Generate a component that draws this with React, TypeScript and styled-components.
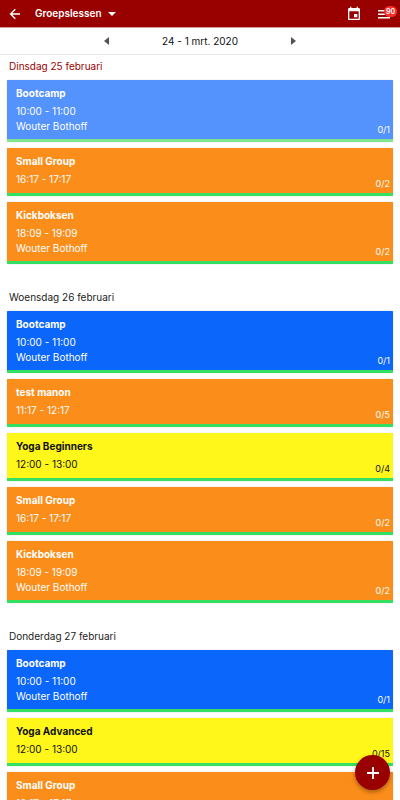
import React from "react";
import styled, { createGlobalStyle } from "styled-components";

const GlobalStyle = createGlobalStyle`
  * { box-sizing: border-box; }
  body {
    margin: 0;
    background: #fff;
    color: #111;
    font: 10px/15px Inter, "Noto Sans", sans-serif;
  }
  button { font: inherit; color: inherit; border: 0; padding: 0; background: none; cursor: pointer; }
`;

const Screen = styled.div`
  height: 100vh;
  display: flex;
  flex-direction: column;
  overflow: hidden;
`;

const TopBar = styled.header`
  flex: none;
  height: 28px;
  display: flex;
  align-items: center;
  padding: 0 9px;
  background: #990000;
  border-bottom: 1px solid #cf9a9a;
  color: #fff;
`;

const IconButton = styled.button`
  display: flex;
  position: relative;
`;

const TitleButton = styled.button`
  display: flex;
  align-items: center;
  gap: 6px;
  margin-left: 14px;
  && { font-weight: 600; }
`;

const Actions = styled.div`
  display: flex;
  align-items: center;
  gap: 15px;
  margin-left: auto;
`;

const Badge = styled.span`
  position: absolute;
  top: -2px;
  right: -6px;
  min-width: 13px;
  height: 11px;
  border-radius: 6px;
  background: #f5302b;
  font-size: 7px;
  line-height: 11px;
  font-weight: 600;
  text-align: center;
`;

const WeekBar = styled.nav`
  flex: none;
  height: 27px;
  display: flex;
  align-items: center;
  justify-content: center;
  border-bottom: 1px solid #e6e6e6;
`;

const WeekLabel = styled.span`
  width: 182px;
  text-align: center;
`;

const Agenda = styled.main`
  flex: 1;
  min-height: 0;
  overflow: hidden;
  padding: 0 7px;
`;

const Day = styled.section`
  & + & { margin-top: 22px; }
`;

const DayTitle = styled.h2<{ $today?: boolean }>`
  margin: 0;
  padding: 3px 2px 6px;
  font-size: 10px;
  line-height: 16px;
  font-weight: 400;
  color: ${(p) => (p.$today ? "#990000" : "#222")};
`;

const Lessons = styled.div`
  display: flex;
  flex-direction: column;
  gap: 6px;
`;

type Tone = "past" | "blue" | "orange" | "yellow";
const fills: Record<Tone, string> = {
  past: "#5492fd",
  blue: "#0b66fb",
  orange: "#fb8d1a",
  yellow: "#fff719",
};

const Card = styled.article<{ $tone: Tone }>`
  display: flex;
  align-items: flex-end;
  justify-content: space-between;
  min-height: 48px;
  padding: 6px 3px 0 9px;
  border-bottom: 3px solid ${(p) => (p.$tone === "past" ? "#81e590" : "#35df61")};
  border-radius: 1px;
  background: ${(p) => fills[p.$tone]};
  color: ${(p) => (p.$tone === "yellow" ? "#111" : "#fff")};
  box-shadow: 0 0 1px rgba(0, 0, 0, 0.4);
`;

const Details = styled.div`
  align-self: flex-start;
  padding-bottom: 5px;
`;

const Name = styled.h3`
  margin: 0 0 3px;
  font-size: 10px;
  line-height: 15px;
  font-weight: 700;
`;

const Line = styled.div``;

const Count = styled.span`
  font-size: 9px;
  line-height: 12px;
  padding-bottom: 3px;
`;

const AddButton = styled.button`
  position: fixed;
  right: 10px;
  bottom: 10px;
  width: 35px;
  height: 35px;
  display: flex;
  align-items: center;
  justify-content: center;
  border-radius: 50%;
  color: #fff;
  && { background: #990000; }
  box-shadow: 0 2px 4px rgba(0, 0, 0, 0.35);
`;

interface Lesson {
  name: string;
  time: string;
  trainer?: string;
  count: string;
  tone: Tone;
}

const bootcamp: Lesson = { name: "Bootcamp", time: "10:00 - 11:00", trainer: "Wouter Bothoff", count: "0/1", tone: "blue" };
const smallGroup: Lesson = { name: "Small Group", time: "16:17 - 17:17", count: "0/2", tone: "orange" };
const kickboksen: Lesson = { name: "Kickboksen", time: "18:09 - 19:09", trainer: "Wouter Bothoff", count: "0/2", tone: "orange" };

const days: { title: string; today?: boolean; lessons: Lesson[] }[] = [
  { title: "Dinsdag 25 februari", today: true, lessons: [{ ...bootcamp, tone: "past" }, smallGroup, kickboksen] },
  {
    title: "Woensdag 26 februari",
    lessons: [
      bootcamp,
      { name: "test manon", time: "11:17 - 12:17", count: "0/5", tone: "orange" },
      { name: "Yoga Beginners", time: "12:00 - 13:00", count: "0/4", tone: "yellow" },
      smallGroup,
      kickboksen,
    ],
  },
  {
    title: "Donderdag 27 februari",
    lessons: [bootcamp, { name: "Yoga Advanced", time: "12:00 - 13:00", count: "0/15", tone: "yellow" }, smallGroup],
  },
];

export default function App() {
  return (
    <Screen>
      <GlobalStyle />
      <TopBar>
        <IconButton aria-label="Terug">
          <svg width="12" height="12" viewBox="0 0 12 12" fill="none" stroke="currentColor" strokeWidth="1.4">
            <path d="M11 6H2M6.3 1.3 1.6 6l4.7 4.7" />
          </svg>
        </IconButton>
        <TitleButton>
          Groepslessen
          <svg width="8" height="4" viewBox="0 0 8 4" fill="currentColor">
            <path d="M0 0h8L4 4z" />
          </svg>
        </TitleButton>
        <Actions>
          <IconButton aria-label="Vandaag">
            <svg width="16" height="16" viewBox="0 0 24 24" fill="currentColor">
              <path d="M17 12h-5v5h5v-5zM16 1v2H8V1H6v2H5c-1.11 0-1.99.9-1.99 2L3 19c0 1.1.89 2 2 2h14c1.1 0 2-.9 2-2V5c0-1.1-.9-2-2-2h-1V1h-2zm3 18H5V8h14v11z" />
            </svg>
          </IconButton>
          <IconButton aria-label="Menu">
            <svg width="14" height="12" viewBox="0 0 14 12" fill="currentColor">
              <path d="M1 2h12v1.5H1zM1 5.5h12V7H1zM1 9h12v1.5H1z" />
            </svg>
            <Badge>90</Badge>
          </IconButton>
        </Actions>
      </TopBar>
      <WeekBar aria-label="Week">
        <IconButton aria-label="Vorige week">
          <svg width="5" height="8" viewBox="0 0 5 8" fill="#555">
            <path d="M5 0v8L0 4z" />
          </svg>
        </IconButton>
        <WeekLabel>24 - 1 mrt. 2020</WeekLabel>
        <IconButton aria-label="Volgende week">
          <svg width="5" height="8" viewBox="0 0 5 8" fill="#555">
            <path d="M0 0v8l5-4z" />
          </svg>
        </IconButton>
      </WeekBar>
      <Agenda>
        {days.map((day) => (
          <Day key={day.title}>
            <DayTitle $today={day.today}>{day.title}</DayTitle>
            <Lessons>
              {day.lessons.map((lesson) => (
                <Card key={lesson.name} $tone={lesson.tone}>
                  <Details>
                    <Name>{lesson.name}</Name>
                    <Line>{lesson.time}</Line>
                    {lesson.trainer && <Line>{lesson.trainer}</Line>}
                  </Details>
                  <Count>{lesson.count}</Count>
                </Card>
              ))}
            </Lessons>
          </Day>
        ))}
      </Agenda>
      <AddButton aria-label="Les toevoegen">
        <svg width="12" height="12" viewBox="0 0 12 12" stroke="currentColor" strokeWidth="1.8">
          <path d="M6 0v12M0 6h12" />
        </svg>
      </AddButton>
    </Screen>
  );
}
